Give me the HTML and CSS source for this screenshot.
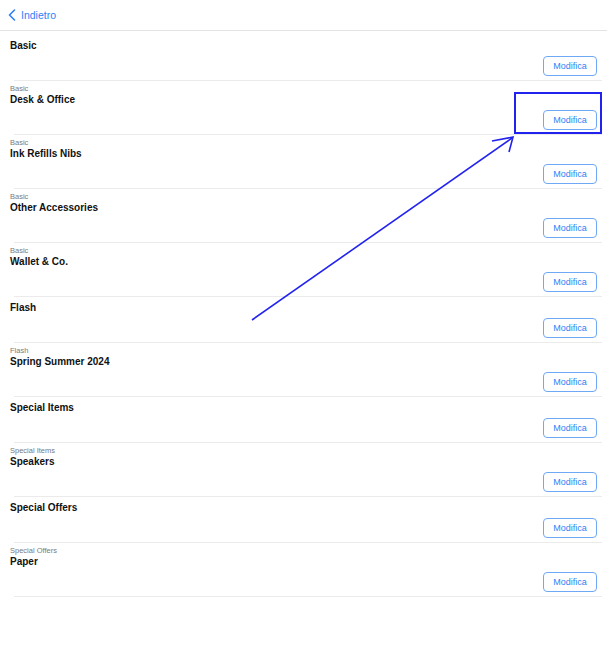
FILE: index.html
```html
<!DOCTYPE html>
<html lang="it">
<head>
<meta charset="utf-8">
<title>Categorie</title>
<link rel="stylesheet" href="styles.css">
</head>
<body>
<div class="page">
  <header class="topbar">
    <a class="back" href="#">
      <svg class="chev" width="8" height="12" viewBox="0 0 8 12"><path d="M6.5 1 L1.5 6 L6.5 11" fill="none" stroke="#2f80f7" stroke-width="1.6" stroke-linecap="round" stroke-linejoin="round"/></svg>
      <span>Indietro</span>
    </a>
  </header>

  <div class="list">
    <div class="row first">
      <div class="title">Basic</div>
      <div class="actions"><button class="btn">Modifica</button></div>
    </div>
    <div class="sep"></div>

    <div class="row sub">
      <div class="parent">Basic</div>
      <div class="title">Desk &amp; Office</div>
      <div class="actions"><button class="btn">Modifica</button></div>
    </div>
    <div class="sep"></div>

    <div class="row sub">
      <div class="parent">Basic</div>
      <div class="title">Ink Refills Nibs</div>
      <div class="actions"><button class="btn">Modifica</button></div>
    </div>
    <div class="sep"></div>

    <div class="row sub">
      <div class="parent">Basic</div>
      <div class="title">Other Accessories</div>
      <div class="actions"><button class="btn">Modifica</button></div>
    </div>
    <div class="sep"></div>

    <div class="row sub">
      <div class="parent">Basic</div>
      <div class="title">Wallet &amp; Co.</div>
      <div class="actions"><button class="btn">Modifica</button></div>
    </div>
    <div class="sep"></div>

    <div class="row">
      <div class="title">Flash</div>
      <div class="actions"><button class="btn">Modifica</button></div>
    </div>
    <div class="sep"></div>

    <div class="row sub">
      <div class="parent">Flash</div>
      <div class="title">Spring Summer 2024</div>
      <div class="actions"><button class="btn">Modifica</button></div>
    </div>
    <div class="sep"></div>

    <div class="row">
      <div class="title">Special Items</div>
      <div class="actions"><button class="btn">Modifica</button></div>
    </div>
    <div class="sep"></div>

    <div class="row sub">
      <div class="parent">Special Items</div>
      <div class="title">Speakers</div>
      <div class="actions"><button class="btn">Modifica</button></div>
    </div>
    <div class="sep"></div>

    <div class="row">
      <div class="title">Special Offers</div>
      <div class="actions"><button class="btn">Modifica</button></div>
    </div>
    <div class="sep"></div>

    <div class="row sub">
      <div class="parent">Special Offers</div>
      <div class="title">Paper</div>
      <div class="actions"><button class="btn">Modifica</button></div>
    </div>
    <div class="sep"></div>
  </div>

  <svg class="annot" width="607" height="669" viewBox="0 0 607 669">
    <rect x="515" y="93" width="86" height="40" fill="none" stroke="#2222ee" stroke-width="2"/>
    <line x1="252" y1="320" x2="512" y2="138" stroke="#2222ee" stroke-width="1.6"/>
    <polyline points="492,141 513,137 509,152" fill="none" stroke="#2222ee" stroke-width="1.6"/>
  </svg>
</div>
</body>
</html>
```

FILE: styles.css
```css
* { box-sizing: border-box; }
html, body {
  margin: 0;
  padding: 0;
  background: #ffffff;
}
body {
  font-family: "Liberation Sans", Arial, Helvetica, sans-serif;
  color: #111111;
}
.page {
  position: relative;
  width: 607px;
  min-height: 669px;
}
.topbar {
  height: 31px;
  border-bottom: 1px solid #e3e3e3;
  display: flex;
  align-items: center;
  padding-left: 8px;
}
.back {
  display: flex;
  align-items: center;
  gap: 5px;
  text-decoration: none;
  color: #2f80f7;
  font-size: 10.5px;
  margin-top: 0;
}
.chev { display: block; }
.list {
  display: flex;
  flex-direction: column;
}
.row {
  display: flex;
  flex-direction: column;
  padding: 4px 10px 4px 10px;
}
.row.first { padding-top: 8px; }
.row.sub { padding-top: 3px; }
.parent {
  font-size: 7.5px;
  line-height: 9px;
  color: #7a7a7a;
}
.title {
  font-size: 10px;
  line-height: 14px;
  font-weight: 700;
  color: #111111;
}
.actions {
  display: flex;
  justify-content: flex-end;
  margin-top: 3px;
}
.btn {
  width: 54px;
  height: 20px;
  border: 1px solid #6fa9f5;
  border-radius: 4px;
  background: #ffffff;
  color: #2f80f7;
  font-family: "Liberation Sans", Arial, sans-serif;
  font-size: 9px;
  padding: 0;
  cursor: pointer;
}
.sep {
  height: 1px;
  margin-left: 14px;
  margin-right: 5px;
  background: #ebebeb;
}
.annot {
  position: absolute;
  left: 0;
  top: 0;
  pointer-events: none;
}
```
